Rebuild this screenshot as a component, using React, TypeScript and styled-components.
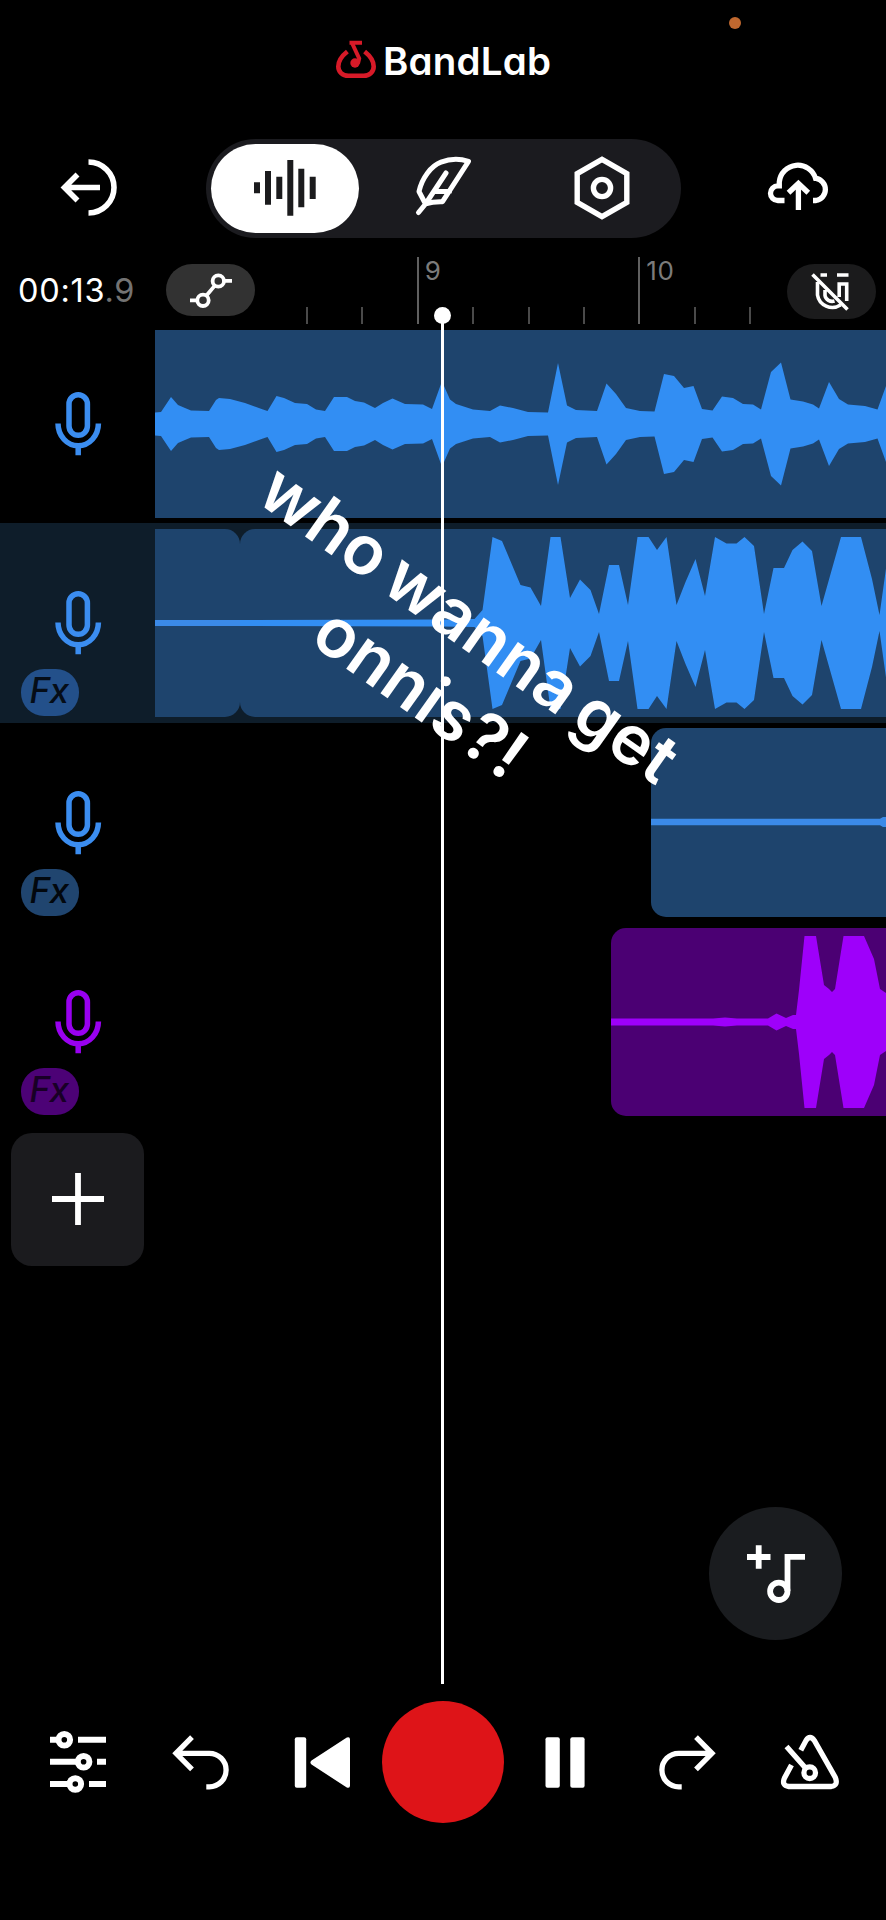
import React from "react";
import styled, { createGlobalStyle } from "styled-components";

const GlobalStyle = createGlobalStyle`
  * { box-sizing: border-box; }
  body { margin: 0; background: #000; }
  svg { display: block; flex: none; overflow: visible; }
`;

const Screen = styled.main`
  position: relative;
  display: flex;
  flex-direction: column;
  width: 886px;
  height: 1920px;
  overflow: hidden;
  background: #000;
  color: #fff;
  font-family: Inter, "Liberation Sans", sans-serif;
`;

const Brand = styled.header`
  display: flex;
  align-items: flex-start;
  height: 139px;
  padding: 38px 0 0 333px;
`;

const BrandName = styled.span`
  margin: 0 0 0 5px;
  font-size: 38.5px;
  line-height: 46px;
  font-weight: 600;
  letter-spacing: 0.2px;
  font-feature-settings: "cv11" 1;
  white-space: nowrap;
`;

const PrivacyDot = styled.i`
  position: absolute;
  left: 729px;
  top: 17px;
  width: 12px;
  height: 12px;
  border-radius: 50%;
  background: #c0682f;
`;

const Toolbar = styled.nav`
  display: flex;
  align-items: center;
  justify-content: space-between;
  height: 99px;
  padding: 0 53px 0 60px;
`;

const Segments = styled.div`
  display: grid;
  grid-template-columns: repeat(3, 1fr);
  width: 475px;
  height: 99px;
  margin-left: 2px;
  border-radius: 50px;
  background: #1b1b1f;
`;

const Segment = styled.button<{ $active?: boolean }>`
  display: flex;
  align-items: center;
  justify-content: center;
  margin: 5px;
  padding: 0 0 2px;
  border: 0;
  border-radius: 45px;
  color: ${(p) => (p.$active ? "#1b1b1d" : "#fff")};
  background: ${(p) => (p.$active ? "#fff" : "transparent")};
`;

const IconButton = styled.button`
  display: flex;
  align-items: center;
  justify-content: center;
  padding: 0;
  border: 0;
  background: none;
  color: #fff;
`;

const ToolbarButton = styled(IconButton)`
  padding-bottom: 4px;
`;

const TransportButton = styled(IconButton)`
  padding-left: 2px;
`;

const Ruler = styled.div`
  display: flex;
  height: 86px;
  align-items: flex-end;
`;

const Time = styled.div`
  flex: none;
  width: 166px;
  height: 59px;
  padding: 6px 0 0 18px;
  font-size: 32.5px;
  line-height: 40px;
  letter-spacing: 0.7px;
  white-space: nowrap;
  span { color: #737373; }
`;

const RulerPill = styled.button<{ $dim?: boolean }>`
  display: flex;
  flex: none;
  align-items: center;
  justify-content: center;
  align-self: flex-start;
  width: 89px;
  height: ${(p) => (p.$dim ? 55 : 52)}px;
  margin-top: 26px;
  padding: 0;
  border: 0;
  border-radius: 28px;
  color: #fff;
  background: ${(p) => (p.$dim ? "#1b1b1c" : "#323232")};
`;

const Ticks = styled.div`
  display: flex;
  flex: 1;
  align-items: flex-end;
  min-width: 0;
  padding-left: 51px;
`;

const Tick = styled.div<{ $major?: boolean }>`
  flex: none;
  width: 55.4px;
  height: ${(p) => (p.$major ? 67 : 17)}px;
  padding-left: 6px;
  border-left: 2px solid ${(p) => (p.$major ? "#606060" : "#4a4a4a")};
  color: #7b7b7b;
  font-size: 26px;
  line-height: 28px;
  letter-spacing: 0.6px;
  &:last-child { width: 20px; }
`;

const RulerTail = styled.div`
  display: flex;
  flex: none;
  width: 99px;
  height: 86px;
`;

const TrackRow = styled.section<{ $selected?: boolean }>`
  display: flex;
  height: 199.4px;
  background: ${(p) => (p.$selected ? "#0e1d2a" : "transparent")};
`;

const TrackHead = styled.div<{ $color: string }>`
  display: flex;
  flex-direction: column;
  width: 155px;
  padding: 67px 0 0 55px;
  color: ${(p) => p.$color};
`;

const FxBadge = styled.span<{ $fill: string; $ink: string }>`
  display: flex;
  align-items: center;
  justify-content: center;
  width: 58px;
  height: 47px;
  margin: 14px 0 0 -34px;
  padding: 0 2px 5px 0;
  border-radius: 23px;
  background: ${(p) => p.$fill};
  color: ${(p) => p.$ink};
  font-size: 35px;
  font-style: italic;
  font-weight: 500;
  line-height: 42px;
  letter-spacing: -0.5px;
`;

const Lane = styled.div`
  display: flex;
  flex: 1;
  padding: 5.5px 0;
`;

const Clip = styled.div<{ $start?: number; $width: number; $fill: string; $radius?: string }>`
  flex: none;
  width: ${(p) => p.$width}px;
  height: 188.5px;
  margin-left: ${(p) => p.$start ?? 0}px;
  border-radius: ${(p) => p.$radius ?? "0"};
  background: ${(p) => p.$fill};
  overflow: hidden;
`;

const AddTrack = styled.button`
  display: flex;
  align-items: center;
  justify-content: center;
  width: 133px;
  height: 133px;
  margin: 11px 0 0 11px;
  padding: 0;
  border: 0;
  border-radius: 21px;
  background: #1b1b1e;
`;

const Fab = styled.button`
  display: flex;
  align-items: center;
  justify-content: center;
  align-self: flex-end;
  width: 133px;
  height: 133px;
  margin: auto 44px 61px 0;
  padding: 0;
  border: 0;
  border-radius: 50%;
  background: #1a1c1f;
`;

const Transport = styled.footer`
  display: grid;
  grid-template-columns: repeat(7, 122px);
  justify-content: center;
  align-items: center;
  height: 122px;
  margin-bottom: 97px;
`;

const Record = styled.button`
  width: 122px;
  height: 122px;
  padding: 0;
  border: 0;
  border-radius: 50%;
  background: #de1418;
`;

const Playhead = styled.div`
  position: absolute;
  left: 441px;
  top: 316px;
  width: 3px;
  height: 1368px;
  background: #fff;
  &::before {
    content: "";
    position: absolute;
    left: -7px;
    top: -9px;
    width: 17px;
    height: 17px;
    border-radius: 50%;
    background: #fff;
  }
`;

const Caption = styled.p`
  position: absolute;
  left: 185px;
  top: 574px;
  width: 520px;
  margin: 0;
  transform: rotate(35.4deg);
  font-size: 68.5px;
  line-height: 84px;
  font-weight: 620;
  letter-spacing: 0.2px;
  word-spacing: -6px;
  text-align: center;
  white-space: pre;
`;

type Point = [number, number];

function Wave({ from, width, color, points }: { from: number; width: number; color: string; points: Point[] }) {
  const top = points.map(([x, h]) => `${x - from},${94 - h}`);
  const bottom = [...points].reverse().map(([x, h]) => `${x - from},${94 + h}`);
  return (
    <svg width={width} height="188" viewBox={`0 0 ${width} 188`}>
      <polygon points={[...top, ...bottom].join(" ")} fill={color} />
    </svg>
  );
}

const vocals: Point[] = [
  [155, 11.5], [161, 12], [171, 27], [178, 19], [185, 16], [191, 13.5], [209, 13], [216, 24], [219, 26], [230, 25],
  [245, 21], [263, 14.5], [267.5, 13], [276.5, 28], [284, 26], [295, 21], [307, 20], [316, 14.5], [325, 13],
  [334, 27], [347, 27], [355, 23], [364, 21.5], [375, 16], [383, 21], [392.5, 25.5], [405, 20], [423, 19.5],
  [432, 15], [441, 40], [444, 38], [450, 24.5], [456, 20], [473, 14.5], [490, 13], [500, 18.5], [513, 16],
  [528, 12], [548, 11.5], [558, 61], [567, 18.5], [576, 14], [597, 13], [606.5, 40.5], [616, 30], [626, 16],
  [640, 13], [654.5, 12.5], [664, 50], [674, 48], [684, 36], [693.5, 38], [702, 15], [712.5, 13.5], [722, 27.5],
  [733, 26], [743, 20], [753, 19.5], [761, 14.5], [771, 52], [781, 61.5], [790.5, 24.5], [803, 22.5], [813, 19.5],
  [819, 15.5], [829, 42], [839, 25], [848, 19.5], [865, 18], [877.5, 14.5], [886, 38],
];

const lead: Point[] = [
  [240, 3], [440, 3.5], [474, 4], [482, 13], [492, 86], [501.5, 82], [520, 38], [530, 35.5], [540.5, 17],
  [550, 86], [560, 86], [569.5, 25], [579.5, 43.5], [590, 33], [598.5, 9], [608.5, 58], [618.5, 58], [627.5, 18],
  [637, 86], [648, 86], [656.5, 73], [666, 86], [676, 18], [685, 41], [695, 64], [704.5, 27], [714.5, 86],
  [726, 79.5], [736, 79.5], [744, 86], [753.5, 77], [763.5, 9], [773, 55], [783.5, 55], [792, 73], [802, 81.5],
  [811.5, 72], [821, 17], [840.5, 86], [860.5, 86], [871.5, 44], [879, 8], [886, 58],
];

const double: Point[] = [[651, 3.3], [880, 3.3], [883, 5], [886, 5]];

const harmony: Point[] = [
  [611, 3.5], [713, 3.5], [725, 4.5], [737, 3.5], [768, 3.5], [776.5, 8.5], [786, 4], [793, 7], [796, 7],
  [799, 32], [804.5, 86], [816, 86], [824, 37], [829, 33], [832, 30], [835, 33], [843.5, 86], [864, 86],
  [874, 63], [880, 33], [886, 29],
];

function Mic() {
  return (
    <svg width="46" height="65" viewBox="0 0 46 65" fill="none" stroke="currentColor" strokeWidth="5.5">
      <rect x="14" y="3.8" width="18.4" height="40.5" rx="9.2" />
      <path d="M3 32.5a20.2 22.3 0 0 0 40.4 0M23.2 54.5v9.8" />
    </svg>
  );
}

function UndoIcon({ mirrored }: { mirrored?: boolean }) {
  return (
    <svg width="57" height="56" viewBox="0 0 57 56" fill="none" stroke="currentColor" strokeWidth="5.3">
      <g transform={mirrored ? "matrix(-1 0 0 1 57 0)" : undefined}>
        <path d="M20 3.2 4 19.3 20 35.4M4 19.3h33.3a16.8 16.8 0 0 1 0 33.6h-3" />
      </g>
    </svg>
  );
}

const blue = "#3b8df0";

export default function App() {
  return (
    <>
      <GlobalStyle />
      <Screen>
        <Brand>
          <svg width="45" height="44" viewBox="8 8 45 44" fill="none" stroke="#d71a28" strokeWidth="4.6">
            <path d="M22.4 21.5C18 25 13.3 31 13.3 36.5c0 5 4 9.3 10 9.3h15.4c6 0 10-4.3 10-9.3 0-5.5-4.7-11.5-9.1-15" />
            <path d="M24.5 12.8h12.5M27 13l7.2 15.5-1.2 5" strokeWidth="4" />
            <circle cx="30" cy="33" r="4.7" fill="#d71a28" stroke="none" />
          </svg>
          <BrandName>BandLab</BrandName>
          <PrivacyDot />
        </Brand>

        <Toolbar>
          <ToolbarButton aria-label="Exit">
            <svg width="60" height="60" viewBox="0 0 60 60" fill="none" stroke="currentColor" strokeWidth="5.6">
              <path d="M40 30.500H4.500M17.500 17.500l-13 13 13 13M28.500 5a25.500 25.500 0 0 1 0 51" />
            </svg>
          </ToolbarButton>
          <Segments>
            <Segment $active aria-label="Tracks">
              <svg width="62" height="56" viewBox="0 0 62 56" fill="currentColor">
                <path d="M0 22.300h6v11H0zM11 11h6v33.700h-6zM22.300 16.700h6V39h-6zM33.300 0h6v55.700h-6zM44.300 8.700h6v38.600h-6zM55.700 16.700h6V39h-6z" />
              </svg>
            </Segment>
            <Segment aria-label="Lyrics">
              <svg width="76" height="86" viewBox="0 0 76 86" fill="none" stroke="currentColor" strokeWidth="5" strokeLinejoin="round" strokeLinecap="round">
                <path d="M13.500 67.500 20.500 59 14 46.500C17 33 26 21 36 17.200c9-3.500 19-3.500 27.500-.9L37.500 56.700C32 56.500 25 57.500 20.500 59L41 28M30.500 46.500h14" />
              </svg>
            </Segment>
            <Segment aria-label="Settings">
              <svg width="58" height="66" viewBox="0 0 58 66" fill="none" stroke="currentColor" strokeWidth="5.4">
                <path d="M29 4.300 53.800 18.600v28.800L29 61.700 4.200 47.400V18.600z" />
                <circle cx="29" cy="33" r="8.6" />
              </svg>
            </Segment>
          </Segments>
          <ToolbarButton aria-label="Save">
            <svg width="68" height="60" viewBox="0 0 68 60" fill="none" stroke="currentColor" strokeWidth="5.3">
              <path d="M19.500 43.500h-6.700a7.300 7.300 0 0 1 0-14.600h1.500v-3.900a18.600 18.600 0 0 1 36.300-3.600h.4a11.200 11.200 0 0 1 0 22.100H48" />
              <path d="M33.400 53V27M23.500 35.800l9.900-9.300 9.900 9.300" />
            </svg>
          </ToolbarButton>
        </Toolbar>

        <Ruler>
          <Time>00:13<span>.9</span></Time>
          <RulerPill aria-label="Automation">
            <svg width="46" height="40" viewBox="0 0 46 40" fill="none" stroke="currentColor" strokeWidth="3.8">
              <path d="M2 30.300h7.200M36 10.800h8M18.500 25.500 26.800 15.600" />
              <circle cx="30.3" cy="11" r="5.7" />
              <circle cx="15" cy="30.3" r="5.7" />
            </svg>
          </RulerPill>
          <Ticks>
            <Tick />
            <Tick />
            <Tick $major>9</Tick>
            <Tick />
            <Tick />
            <Tick />
            <Tick $major>10</Tick>
            <Tick />
            <Tick />
          </Ticks>
          <RulerTail>
            <RulerPill $dim aria-label="Snap off">
              <svg width="40" height="42" viewBox="31 15 40 42" fill="none" stroke="currentColor" strokeWidth="3.6">
                <path d="M39.500 19h6.500M56 19h11.500M36.500 26v13a15 14.500 0 0 0 23 10M65.700 45V28h-7.500v13M44 34v5.500a7.300 7 0 0 0 9.500 5.500M31.500 18.500l35 35" />
              </svg>
            </RulerPill>
          </RulerTail>
        </Ruler>

        <TrackRow>
          <TrackHead $color={blue}><Mic /></TrackHead>
          <Lane>
            <Clip $width={731} $fill="#1e446d">
              <Wave from={155} width={731} color="#328ef3" points={vocals} />
            </Clip>
          </Lane>
        </TrackRow>

        <TrackRow $selected>
          <TrackHead $color={blue}>
            <Mic />
            <FxBadge $fill="#23508a" $ink="#050d17">Fx</FxBadge>
          </TrackHead>
          <Lane>
            <Clip $width={84.5} $fill="#1e446d" $radius="0 15px 15px 0">
              <Wave from={155} width={85} color="#3b8ae8" points={[[155, 3], [240, 3]]} />
            </Clip>
            <Clip $width={646.5} $fill="#1e446d" $radius="15px 0 0 15px">
              <Wave from={239.5} width={647} color="#328ef3" points={[[239, 3], ...lead]} />
            </Clip>
          </Lane>
        </TrackRow>

        <TrackRow>
          <TrackHead $color={blue}>
            <Mic />
            <FxBadge $fill="#20456f" $ink="#02070d">Fx</FxBadge>
          </TrackHead>
          <Lane>
            <Clip $start={496} $width={235} $fill="#1e446d" $radius="15px 0 0 15px">
              <Wave from={651} width={235} color="#3b8ae8" points={double} />
            </Clip>
          </Lane>
        </TrackRow>

        <TrackRow>
          <TrackHead $color="#9900f0">
            <Mic />
            <FxBadge $fill="#4c0276" $ink="#180026">Fx</FxBadge>
          </TrackHead>
          <Lane>
            <Clip $start={456} $width={275} $fill="#4b0073" $radius="15px 0 0 15px">
              <Wave from={611} width={275} color="#9e00fa" points={harmony} />
            </Clip>
          </Lane>
        </TrackRow>

        <AddTrack aria-label="Add track">
          <svg width="52" height="52" viewBox="0 0 52 52" stroke="#fff" strokeWidth="5.8">
            <path d="M0 26h52M26 0v52" />
          </svg>
        </AddTrack>

        <Fab aria-label="Add loop">
          <svg width="58" height="58" viewBox="0 0 58 58" fill="none" stroke="#fff" strokeWidth="5.8">
            <path d="M0 12h23.500M11.700.3v23.400M58 11.800H40.500V46" />
            <circle cx="31.8" cy="46.3" r="8.7" />
          </svg>
        </Fab>

        <Transport>
          <TransportButton aria-label="Mixer">
            <svg width="56" height="62" viewBox="0 0 56 62" fill="none" stroke="currentColor" strokeWidth="6">
              <path d="M0 8.700h8M28 8.700h28M0 30.800h27M47 30.800h9M0 53h19M39 53h17" />
              <circle cx="14.3" cy="8.7" r="5.8" />
              <circle cx="33.6" cy="30.8" r="5.8" />
              <circle cx="25.3" cy="53" r="5.8" />
            </svg>
          </TransportButton>
          <TransportButton aria-label="Undo"><UndoIcon /></TransportButton>
          <TransportButton aria-label="Back to start">
            <svg width="56" height="51" viewBox="0 0 56 51" fill="currentColor">
              <rect x="0.8" y="0.3" width="11.4" height="50.4" rx="2" />
              <path d="M17.500 23.400 52.800.5Q56-.8 56 2.500v46q0 3.300-3.200 2L17.500 27.600q-2.200-2 0-4.200z" />
            </svg>
          </TransportButton>
          <Record aria-label="Record" />
          <IconButton aria-label="Pause">
            <svg width="40" height="51" viewBox="0 0 40 51" fill="currentColor">
              <rect x="0.5" y="0.3" width="14.3" height="50.4" rx="2" />
              <rect x="25.3" y="0.3" width="14.3" height="50.4" rx="2" />
            </svg>
          </IconButton>
          <IconButton aria-label="Redo"><UndoIcon mirrored /></IconButton>
          <TransportButton aria-label="Metronome">
            <svg width="60" height="58" viewBox="0 0 60 58" fill="none" stroke="currentColor" strokeWidth="5.3">
              <path d="M20.800 17.300 26 7.500q4-6 8.300 0L55.300 44.500q3.200 8-4 9H8.800q-7.500-1-4.300-8.500L11.500 32M6.500 13.500 25.500 35" />
              <circle cx="29.7" cy="39.7" r="5.8" />
            </svg>
          </TransportButton>
        </Transport>

        <Playhead />
        <Caption>{"who wanna get\nonnis?!"}</Caption>
      </Screen>
    </>
  );
}
